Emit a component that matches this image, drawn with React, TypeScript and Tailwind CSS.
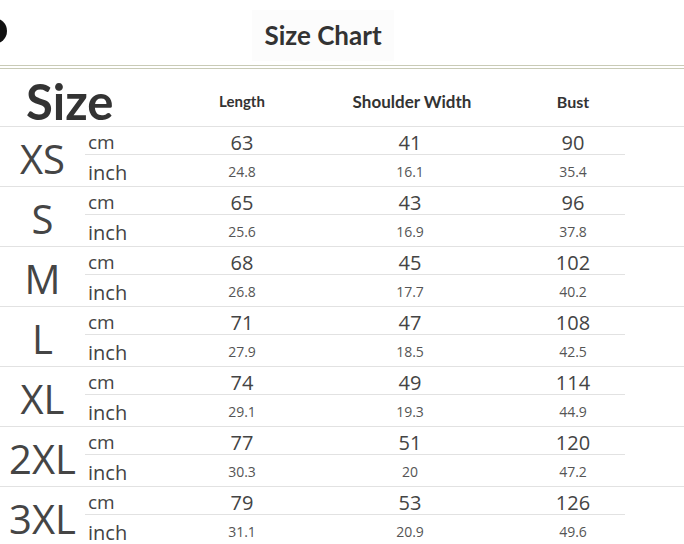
import React from "react";

const rows = [
  { size: "XS", cm: ["63", "41", "90"], inch: ["24.8", "16.1", "35.4"] },
  { size: "S", cm: ["65", "43", "96"], inch: ["25.6", "16.9", "37.8"] },
  { size: "M", cm: ["68", "45", "102"], inch: ["26.8", "17.7", "40.2"] },
  { size: "L", cm: ["71", "47", "108"], inch: ["27.9", "18.5", "42.5"] },
  { size: "XL", cm: ["74", "49", "114"], inch: ["29.1", "19.3", "44.9"] },
  { size: "2XL", cm: ["77", "51", "120"], inch: ["30.3", "20", "47.2"] },
  { size: "3XL", cm: ["79", "53", "126"], inch: ["31.1", "20.9", "49.6"] },
];

// column widths after the unit column: Length, Shoulder Width, Bust
const cols = ["w-[114px]", "w-[222px]", "w-[104px]"];

export default function App() {
  return (
    <div className="relative w-[684px] h-[544px] overflow-hidden bg-white font-['Open_Sans',sans-serif] text-[#444]">
      {/* dark disc peeking in on the left */}
      <div className="absolute left-[-19px] top-[18px] w-[26px] h-[26px] rounded-full bg-[#111]" />

      <div className="h-[65px] flex items-center justify-center pr-[38px] pt-[6px]">
        <h1 className="font-['Lato',sans-serif] font-bold text-[26px] text-[#333] bg-[#fcfcfc] px-[12px] py-[6px]">
          Size Chart
        </h1>
      </div>
      <div className="h-[4px] border-y border-[#c9cbb6]" />

      <div className="h-[58px] flex items-center border-b border-[#e2e2e2]">
        <div className="w-[185px] pl-[26px] pt-[8px] font-['Lato',sans-serif] font-bold text-[49px] leading-none text-[#333]">
          Size
        </div>
        <div className="w-[114px] text-center font-['Lato',sans-serif] font-bold text-[15px] text-[#333] pt-[8px]">
          Length
        </div>
        <div className="w-[226px] text-center font-['Lato',sans-serif] font-bold text-[17px] text-[#333] pt-[8px]">
          Shoulder Width
        </div>
        <div className="w-[96px] text-center font-['Lato',sans-serif] font-bold text-[16px] text-[#333] pt-[8px]">
          Bust
        </div>
      </div>

      {rows.map((r) => (
        <div key={r.size} className="h-[60px] flex border-b border-[#e2e2e2]">
          <div className="w-[85px] flex items-center justify-center pt-[4px] text-[40px] leading-none text-[#454545]">
            {r.size}
          </div>
          <div className="flex flex-col">
            <div className="h-[28px] w-[540px] flex items-center border-b border-[#e2e2e2] pt-[4px]">
              <div className="w-[100px] pl-[3px] text-[19px] leading-none">cm</div>
              {r.cm.map((v, i) => (
                <div key={i} className={`${cols[i]} text-center text-[20px] leading-none`}>
                  {v}
                </div>
              ))}
            </div>
            <div className="h-[31px] w-[540px] flex items-center">
              <div className="w-[100px] pl-[3px] pt-[5px] text-[20px] leading-none">inch</div>
              {r.inch.map((v, i) => (
                <div key={i} className={`${cols[i]} text-center text-[14px] leading-none text-[#555] pt-[3px]`}>
                  {v}
                </div>
              ))}
            </div>
          </div>
        </div>
      ))}
    </div>
  );
}
